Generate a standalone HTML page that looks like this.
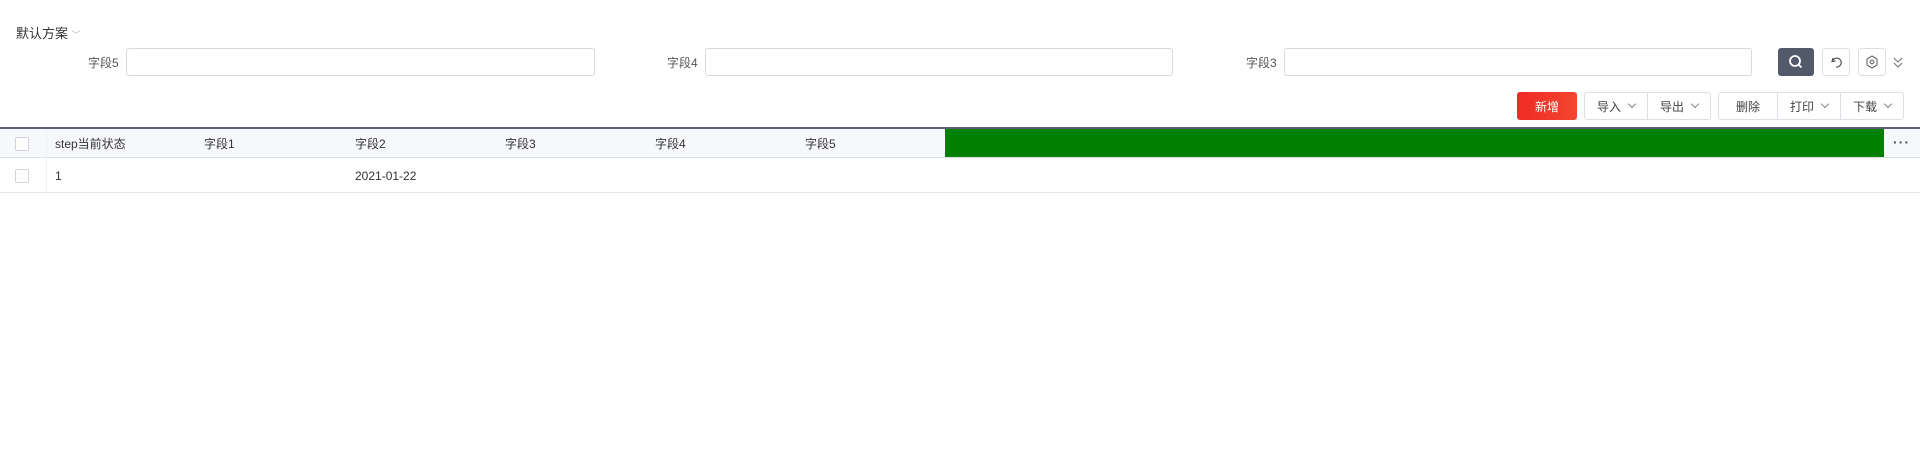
<!DOCTYPE html>
<html><head><meta charset="utf-8"><style>
*{box-sizing:border-box;margin:0;padding:0}
body{width:1920px;height:464px;background:#fff;font-family:"Liberation Sans","Noto Sans CJK SC",sans-serif;font-size:13px;color:#333;position:relative;overflow:hidden}
.a{position:absolute}
.inp{position:absolute;top:48px;height:28px;border:1px solid #d9d9d9;border-radius:3px;background:#fff}
.lbl{position:absolute;top:54px;font-size:12px;color:#555}
.btn{position:absolute;top:92px;height:28px;border:1px solid #dcdfe6;border-radius:3px;background:#fff;display:flex}
.btn span{display:flex;align-items:center;justify-content:center;font-size:12px;color:#444;border-right:1px solid #dcdfe6;height:100%}
.btn span:last-child{border-right:none}
.chev{display:inline-block;width:6px;height:6px;border-right:1px solid #888;border-bottom:1px solid #888;transform:rotate(45deg);margin-left:8px;margin-top:-4px}
.cb{position:absolute;left:15px;width:14px;height:14px;border:1px solid #d0d3d9;border-radius:2px;background:#fff}
.th{position:absolute;top:135px;font-size:12px;color:#333}
</style></head><body>
<div class="a" style="left:16px;top:23px;font-size:13px;color:#333">默认方案 <span style="font-size:9px;color:#bbb">﹀</span></div>

<div class="lbl" style="left:88px">字段5</div>
<div class="inp" style="left:126px;width:469px"></div>
<div class="lbl" style="left:667px">字段4</div>
<div class="inp" style="left:705px;width:468px"></div>
<div class="lbl" style="left:1246px">字段3</div>
<div class="inp" style="left:1284px;width:468px"></div>

<div class="a" style="left:1778px;top:48px;width:36px;height:28px;background:#525a6a;border-radius:3px">
<svg width="36" height="28"><circle cx="17" cy="13" r="5" fill="none" stroke="#fff" stroke-width="1.8"/><line x1="20.5" y1="16.5" x2="23.5" y2="19.5" stroke="#fff" stroke-width="1.8"/></svg></div>
<div class="a" style="left:1822px;top:48px;width:28px;height:28px;border:1px solid #dcdfe6;border-radius:3px">
<svg width="26" height="26"><path d="M10 9 L9 12.5 L12.5 12" fill="none" stroke="#555" stroke-width="1.2"/><path d="M9.5 12 A4.5 4.5 0 1 1 13 18" fill="none" stroke="#555" stroke-width="1.2"/></svg></div>
<div class="a" style="left:1858px;top:48px;width:28px;height:28px;border:1px solid #dcdfe6;border-radius:3px">
<svg width="26" height="26"><path d="M13 7 L18 10 L18 16 L13 19 L8 16 L8 10 Z" fill="none" stroke="#666" stroke-width="1.1"/><circle cx="13" cy="13" r="1.8" fill="none" stroke="#666" stroke-width="1.1"/></svg></div>
<svg class="a" style="left:1892px;top:55px" width="12" height="14"><path d="M2 3 L6 7 L10 3 M2 8 L6 12 L10 8" fill="none" stroke="#777" stroke-width="1.1"/></svg>

<div class="a" style="left:1517px;top:92px;width:60px;height:28px;border-radius:3px;background:linear-gradient(90deg,#ef2a25,#f4462e);color:#fff;font-size:12px;display:flex;align-items:center;justify-content:center">新增</div>
<div class="btn" style="left:1584px;width:127px"><span style="width:63px">导入<i class="chev"></i></span><span style="width:62px">导出<i class="chev"></i></span></div>
<div class="btn" style="left:1718px;width:186px"><span style="width:59px">删除</span><span style="width:63px">打印<i class="chev"></i></span><span style="width:62px">下载<i class="chev"></i></span></div>

<div class="a" style="left:0;top:127px;width:1920px;height:2px;background:#5a6070"></div>
<div class="a" style="left:0;top:129px;width:1920px;height:29px;background:#f7f8fc;border-bottom:1px solid #dde0e6"></div>
<div class="a" style="left:945px;top:129px;width:939px;height:28px;background:#008000"></div>
<div class="a" style="left:1893px;top:134px;font-size:14px;color:#555;letter-spacing:1px;font-weight:bold">···</div>
<div class="a" style="left:46px;top:129px;width:1px;height:64px;background:#eef0f3"></div>
<div class="cb" style="top:137px"></div>
<div class="th" style="left:55px">step当前状态</div>
<div class="th" style="left:204px">字段1</div>
<div class="th" style="left:355px">字段2</div>
<div class="th" style="left:505px">字段3</div>
<div class="th" style="left:655px">字段4</div>
<div class="th" style="left:805px">字段5</div>

<div class="a" style="left:0;top:192px;width:1920px;height:1px;background:#e4e6ea"></div>
<div class="cb" style="top:169px"></div>
<div class="th" style="left:55px;top:169px">1</div>
<div class="th" style="left:355px;top:169px">2021-01-22</div>
</body></html>
